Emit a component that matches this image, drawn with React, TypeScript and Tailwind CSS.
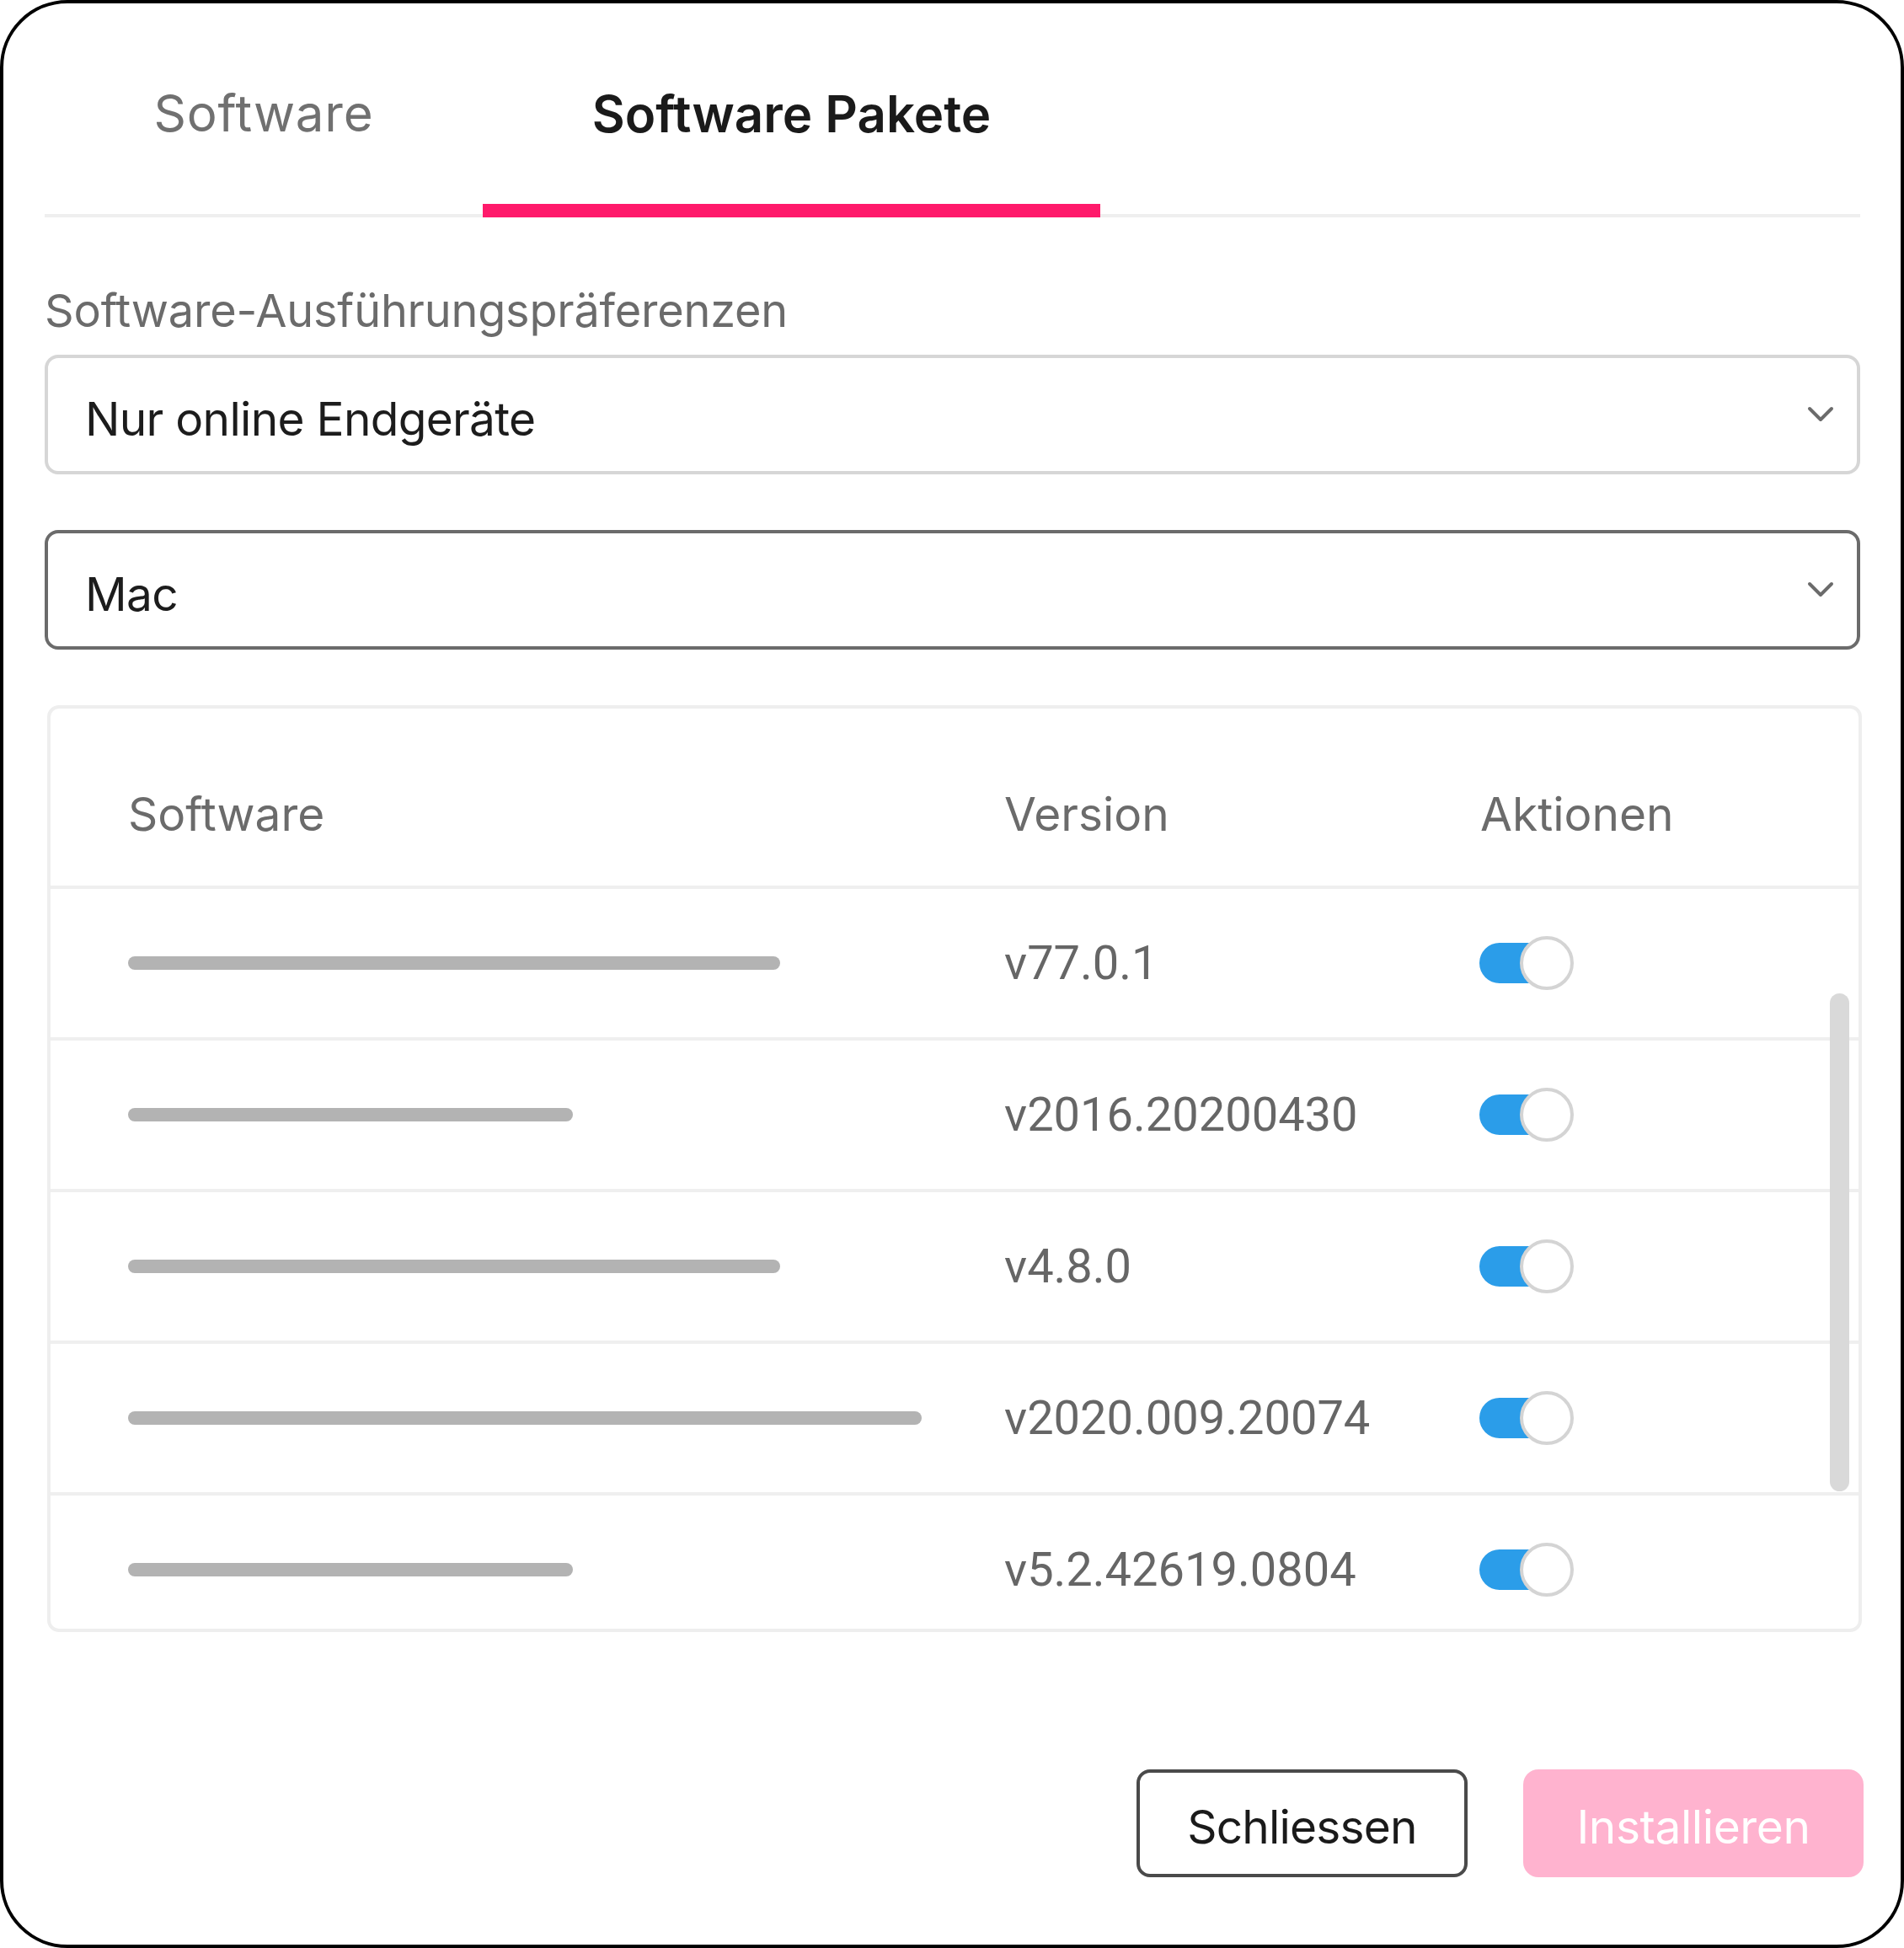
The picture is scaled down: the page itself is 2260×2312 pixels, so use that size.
import React from "react";

const rows = [
  { bar: "w-[774px]", version: "v77.0.1" },
  { bar: "w-[528px]", version: "v2016.20200430" },
  { bar: "w-[774px]", version: "v4.8.0" },
  { bar: "w-[942px]", version: "v2020.009.20074" },
  { bar: "w-[528px]", version: "v5.2.42619.0804" },
];

const Chevron = () => (
  <svg width="32" height="20" viewBox="0 0 32 20" fill="none">
    <polyline points="3,3 16,16 29,3" stroke="#6b6b6b" strokeWidth="4" strokeLinecap="round" strokeLinejoin="round" />
  </svg>
);

const Toggle = () => (
  <div className="flex items-center">
    <div className="w-[100px] h-[48px] rounded-full bg-[#2b9de9]" />
    <div className="-ml-[52px] w-[64px] h-[64px] rounded-full bg-white border-4 border-[#d4d4d4]" />
  </div>
);

const Select: React.FC<{ value: string; active?: boolean }> = ({ value, active }) => (
  <div
    className={`h-[142px] flex items-center justify-between pl-[44px] pr-[27px] rounded-[16px] border-4 bg-white ${
      active ? "border-[#6b6b6b]" : "border-[#d6d6d6]"
    }`}
  >
    <span className="pt-[9px] text-[55px] leading-[66px] tracking-[-0.7px] text-[#1c1c1c]">{value}</span>
    <Chevron />
  </div>
);

export default function App() {
  return (
    <div className="w-[2260px] h-[2312px] bg-white border-4 border-black rounded-[80px] pl-[49px] pr-[48px] flex flex-col font-[Inter,sans-serif] overflow-hidden">
      {/* tabs */}
      <div className="flex border-b-4 border-[#efefef]">
        <button className="w-[520px] flex flex-col items-center pt-[94px] -mb-[4px]">
          <span className="text-[60px] leading-[72px] tracking-[0.8px] text-[#707070]">Software</span>
          <span className="mt-[72px] h-[16px] w-full" />
        </button>
        <button className="w-[733px] flex flex-col items-center pt-[95px] -mb-[4px]">
          <span className="text-[60px] leading-[72px] font-semibold text-[#1a1a1a]">Software Pakete</span>
          <span className="mt-[71px] h-[16px] w-full bg-[#ff1a6b]" />
        </button>
      </div>

      <div className="mt-[78px] text-[54px] leading-[66px] tracking-[-0.2px] text-[#6b6b6b]">Software-Ausführungspräferenzen</div>

      <div className="mt-[19px]">
        <Select value="Nur online Endgeräte" />
      </div>
      <div className="mt-[66px]">
        <Select value="Mac" active />
      </div>

      {/* table */}
      <div className="mt-[66px] ml-[3px] -mr-[2px] h-[1100px] border-4 border-[#eeeeee] rounded-[14px] overflow-hidden flex flex-col">
        <div className="h-[214px] shrink-0 border-b-4 border-[#efefef] grid grid-cols-[1040px_565px_1fr] pl-[92px] pt-[92px] text-[55px] leading-[66px] text-[#6b6b6b]">
          <span>Software</span>
          <span>Version</span>
          <span>Aktionen</span>
        </div>
        <div className="relative flex-1 overflow-hidden">
          {rows.map((r, i) => (
            <div
              key={i}
              className="h-[180px] shrink-0 border-b-4 border-[#efefef] grid grid-cols-[1040px_564px_1fr] items-center pl-[92px]"
            >
              <div className={`h-[16px] rounded-full bg-[#b3b3b3] ${r.bar}`} />
              <span className="font-[Roboto,sans-serif] text-[56px] leading-[66px] text-[#666666]">{r.version}</span>
              <Toggle />
            </div>
          ))}
          <div className="absolute top-[124px] right-[11px] w-[23px] h-[591px] rounded-full bg-[#d9d9d9]" />
        </div>
      </div>

      {/* footer */}
      <div className="mt-[163px] flex justify-end gap-[66px] -mr-[4px]">
        <button className="w-[393px] h-[128px] pt-[8px] rounded-[16px] border-4 border-[#4a4a4a] text-[55px] tracking-[-0.8px] text-[#1a1a1a] flex items-center justify-center">
          Schliessen
        </button>
        <button className="w-[404px] h-[128px] pt-[8px] rounded-[18px] bg-[#ffb3cf] text-[55px] tracking-[-0.4px] text-white flex items-center justify-center">
          Installieren
        </button>
      </div>
    </div>
  );
}
